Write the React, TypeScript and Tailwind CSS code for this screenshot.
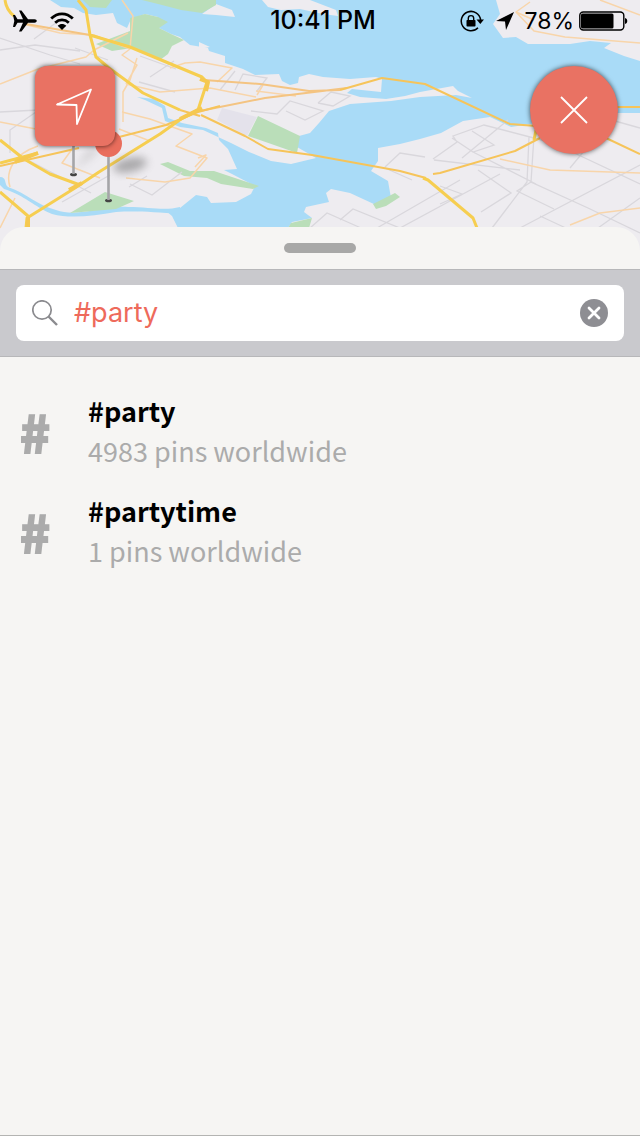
import { useState } from "react";

const tags = [
  { name: "#party", pins: 4983 },
  { name: "#partytime", pins: 1 },
];

function CityMap() {
  return (
    <svg
      viewBox="0 0 640 250"
      preserveAspectRatio="xMidYMin slice"
      className="absolute inset-0 h-full w-full"
      aria-hidden="true"
    >
      <rect width="640" height="250" fill="#eeecf0" />
      {/* water */}
      <path
        fill="#a9dbf7"
        d="M50 0L61 7L74 8L83 13L96 15L113 13L117 23L127 28L131 19L145 14L158 17L159 28L171 34L180 37L190 45L208 48L209 51L225 56L225 63L243 69L255 75L279 74L282 81L290 85L298 83L299 77L309 74L323 77L350 79L376 77L382 79L381 92L352 89L347 93L360 97L386 99L405 96L420 92L453 86L458 91L472 98L456 95L420 97L391 101L350 104L329 111L319 123L310 133L299 136L297 147L316 158L291 164L271 161L249 152L231 143L203 130L180 127L165 121L162 108L145 100L137 97L154 99L165 106L168 118L182 123L206 128L218 133L219 140L228 149L237 169L224 170L232 174L255 186L251 194L236 202L211 203L207 197L196 195L180 208L166 211L172 216L178 228L288 228L292 222L312 218L304 212L306 207L329 202L326 193L331 189L350 193L363 199L376 205L391 198L388 181L371 171L378 161L378 148L400 144L420 139L441 133L463 121L490 117L511 127L531 124L560 113L640 113V61L624 56L604 48L611 43L590 41L570 44L528 44L516 37L503 38L493 24L500 14L496 0L310 0L336 10L338 16L323 14L300 9L281 10L268 7L262 0Z"
      />
      <path fill="#eeecf0" d="M202 14L216 4L232 10L235 17L216 15ZM199 42L210 47L199 49Z" />
      <path fill="#a9dbf7" d="M0 177C7 177 4 184 8 187C28 194 36 205 56 210C78 218 104 205 128 207C150 207 164 211 180 207V214C153 212 136 211 116 212C93 216 70 219 52 214C33 206 26 196 4 189L0 185Z" />
      {/* parks */}
      <path
        fill="#badeb9"
        d="M83 0L90 7L106 8L112 0ZM142 0L162 5L181 10L202 13L216 5L216 0ZM96 44L130 31L130 18L145 14L158 17L168 22L159 28L171 34L184 40L172 46L168 54L160 60L132 48L112 51ZM258 116L300 136L297 153L248 136ZM70 213L105 192L134 201L116 209ZM160 164L168 162L190 171L214 171L229 176L259 186L253 189L221 184L207 178L184 176ZM373 204L395 193L400 197L386 206L376 209ZM291 223L312 218L309 228H288Z"
      />
      <path fill="#e4e2eb" d="M222 108L257 117L247 136L217 120Z" />
      {/* side streets */}
      <g fill="none" stroke="#d9d7dc" strokeWidth="1.3">
        <path d="M0 38L50 55L80 64M34 39L57 22M0 50L35 45L80 51M0 112L38 110M10 153V130L36 112M75 48L108 60M140 56L176 69M150 77L174 61M139 82L175 92M129 187L147 176M130 184L152 195L182 172M62 202L110 175M26 159L91 193" />
        <path d="M220 90L235 71M235 90L243 74L267 78L257 91M251 111L277 114L290 101L323 111L305 120L286 111M318 103L331 92L350 96L333 106L318 103" />
        <path d="M310 228L327 213L361 228M340 220L353 209L400 228L500 174M377 228L460 180M385 167L400 153L425 157M385 168L412 180M433 159L457 142L453 136L484 125L553 143M452 138L473 152L494 145L472 131M473 152L536 184M478 170L511 193L481 212M434 160L520 170M508 120L462 158M440 186L462 194L440 204M534 136L531 182L588 208L640 233M531 182L517 191L554 209M529 137L527 182L492 228M640 165L520 228M553 143L640 184M603 128L570 168M615 121L640 128M598 228L640 198M540 216L568 229" />
      </g>
      {/* minor roads */}
      <g fill="none" stroke="#f8d5aa" strokeWidth="1.5" strokeLinejoin="round">
        <path d="M23 24L60 33L94 35L130 49M0 84L38 69L86 57L94 50L128 33M122 0L133 16L130 49L122 55L137 65L126 84M137 58L130 80L123 92V122M126 84L160 92L210 88L256 97M170 68L185 63L200 62L232 68L217 82M122 112L150 119L192 134L176 146L207 158L190 178L165 182L126 178M119 129L150 141M0 122L41 130M75 145L62 163L100 178M10 187C5 171 14 154 38 146M0 228L15 198M198 158L206 155L195 167M534 20L516 12L530 2M516 12L534 31L565 37L640 43M600 0L640 15M500 159L550 170L640 173M570 225L600 213L640 208M256 91L296 96M263 85L257 95" />
      </g>
      {/* highways */}
      <g fill="none" stroke="#f6c45a" strokeLinejoin="round">
        <path strokeWidth="2" stroke="#f4c482" d="M204 80L260 84L309 91L340 90M200 111L265 98L347 88M26 24L90 35L130 47" />
        <path strokeWidth="2" d="M119 137L166 125L198 112L220 106M340 90L382 78L425 84L510 124L536 126M201 115L245 136L268 149L312 155L400 171L426 178M540 138L515 151L440 173L433 174M606 138L640 154M610 107H640M0 166L79 148M180 110L200 116" />
        <path stroke="#f6ce50" strokeWidth="3" d="M5 0C6 8 9 12 14 16M90 35L130 47L202 77L207 82L198 110L181 119L160 134L99 172L75 188L27 218L26 228M78 0L86 10L90 35L96 57L109 68L143 93L180 110M0 140L24 159L50 174L80 185M0 192L28 216M0 163L38 153M423 178L428 180L473 218L477 228M534 140L536 130" />
        <path strokeWidth="4" stroke="#f5c851" d="M15 162L38 153M180 119L202 108M28 217V228M69 190L82 183M200 79L208 82L206 91" />
      </g>
    </svg>
  );
}

function Pins() {
  return (
    <svg viewBox="0 0 130 150" className="absolute top-[60px] left-[30px] h-[150px] w-[130px]" aria-hidden="true">
      <defs>
        <filter id="shade" x="-50%" y="-50%" width="200%" height="200%">
          <feGaussianBlur stdDeviation="4" />
        </filter>
      </defs>
      <ellipse cx="100" cy="105" rx="17" ry="7" transform="rotate(-12 100 105)" fill="#555" opacity=".45" filter="url(#shade)" />
      <path d="M45 110L58 91L73 86Z" fill="#555" opacity=".25" filter="url(#shade)" />
      <ellipse cx="43.500" cy="114.500" rx="3.500" ry="1.800" fill="#444" />
      <ellipse cx="78.500" cy="140.500" rx="3.500" ry="1.800" fill="#444" />
      <path d="M43.500 84V114M78.500 96V140" stroke="#a5a5a8" strokeWidth="2.600" />
      <circle cx="78.500" cy="83.500" r="13.500" fill="#e96d5c" />
    </svg>
  );
}

function StatusBar() {
  return (
    <div className="relative grid h-[42px] grid-cols-[1fr_auto_1fr] items-center px-3 font-['Inter',sans-serif] text-black">
      <div className="flex items-center gap-3">
        <svg viewBox="0 0 26 24" className="h-6 w-[26px]" aria-label="Airplane mode">
          <path d="M1 6H3L5.500 10.300H11L7 1.500H9.500L16 10.300H22.500C25.500 10.300 25.500 13.700 22.500 13.700H16L9.500 22.500H7L11 13.700H5.500L3 18H1L2.300 12Z" />
        </svg>
        <svg viewBox="0 0 24 18" className="h-[18px] w-6" aria-label="Wi-Fi">
          <path d="M1.200 6.500C7.500.2 16.500.2 22.800 6.500M5.200 10.800C9.200 7 14.800 7 18.800 10.800" fill="none" stroke="#000" strokeWidth="2.800" />
          <path d="M7.700 13.700C10.200 11.400 13.800 11.400 16.300 13.700L12 18Z" />
        </svg>
      </div>
      <span className="ml-1.5 text-[25px] font-medium">10:41 PM</span>
      <div className="flex items-center justify-end">
        <svg viewBox="0 0 24 22" className="mr-3 h-[22px] w-6" aria-label="Rotation lock">
          <path d="M18 17.800A9.700 9.700 0 1 1 20.600 10" fill="none" stroke="#000" strokeWidth="1.500" />
          <path d="M16.500 9.500H24L20.300 14Z" />
          <rect x="6.500" y="10" width="9" height="6.500" rx=".8" />
          <path d="M8.300 11V8.300a2.700 2.700 0 0 1 5.400 0V11" fill="none" stroke="#000" strokeWidth="1.400" />
        </svg>
        <svg viewBox="0 0 18 18" className="mr-2.5 h-[18px] w-[18px]" aria-label="Location in use">
          <path d="M0 9L18 0L10 18L9 9.500Z" />
        </svg>
        <span className="mr-1 text-[23px]">78%</span>
        <svg viewBox="0 0 50 20" className="h-5 w-[50px]" aria-label="Battery">
          <rect x="1.800" y="1" width="44" height="18" rx="3.500" fill="none" stroke="#000" strokeWidth="1.400" />
          <rect x="3" y="2.500" width="32.500" height="15" rx="1.500" />
          <path d="M47 7C50 7.500 50 12.500 47 13Z" />
        </svg>
      </div>
    </div>
  );
}

export default function App() {
  const [query, setQuery] = useState("#party");

  return (
    <div className="relative flex min-h-screen flex-col border-b border-[#b4b4b2] bg-[#f6f5f3]">
      <header className="relative h-[227px]">
        <div className="absolute inset-x-0 top-0 h-[250px] overflow-hidden">
          <CityMap />
        </div>
        <StatusBar />
        <Pins />
        <div className="relative flex items-start justify-between pt-6 pr-[22px] pl-[35px]">
          <button
            type="button"
            aria-label="Go to my location"
            className="flex size-20 items-center justify-center rounded-xl bg-[#e97263] shadow-[0_0_5px_rgba(0,0,0,0.7)]"
          >
            <svg viewBox="0 0 80 80" className="size-20" fill="none" stroke="#fff" strokeWidth="1.800">
              <path d="M56 23.500L22 38.500L41.500 39L42 58Z" strokeLinejoin="round" />
            </svg>
          </button>
          <button
            type="button"
            aria-label="Close"
            className="flex size-[88px] items-center justify-center rounded-full bg-[#e97263] shadow-[0_0_5px_rgba(0,0,0,0.65)]"
          >
            <svg viewBox="0 0 28 28" className="size-7" stroke="#fff" strokeWidth="1.800">
              <path d="M1 1L27 27M27 1L1 27" />
            </svg>
          </button>
        </div>
      </header>

      <main className="relative flex-1 rounded-t-3xl bg-[#f6f5f3]">
        <div className="flex h-[42px] justify-center pt-4">
          <div className="h-[10px] w-[72px] rounded-full bg-[#a8a8a7]" />
        </div>
        <div className="border-y border-[#b7b7b9] bg-[#c9c9cd] px-4 py-[15px]">
          <div className="flex h-14 items-center rounded-lg bg-white px-4">
            <svg viewBox="0 0 26 26" className="size-[26px] shrink-0" fill="none" stroke="#8b8b8f" aria-hidden="true">
              <circle cx="10" cy="10" r="9.200" strokeWidth="1.700" />
              <path d="M16.500 16.500L25 25" strokeWidth="2.400" />
            </svg>
            <input
              type="text"
              aria-label="Search tags"
              value={query}
              onChange={(e) => setQuery(e.target.value)}
              className="ml-4 min-w-0 flex-1 bg-transparent font-['Inter',sans-serif] text-[27px] text-[#ee6a5b] outline-none"
            />
            <button type="button" aria-label="Clear search" onClick={() => setQuery("")}>
              <svg viewBox="0 0 28 28" className="size-7">
                <circle cx="14" cy="14" r="14" fill="#8e8e93" />
                <path d="M9 9L19 19M19 9L9 19" stroke="#fff" strokeWidth="2.800" strokeLinecap="round" />
              </svg>
            </button>
          </div>
        </div>

        <ul className="pt-6 font-['Noto_Sans_CJK_SC','Noto_Sans',sans-serif]">
          {tags.map((tag) => (
            <li key={tag.name} className="flex h-[100px] items-center pr-4 pl-5">
              <span
                className="w-[68px] text-[51px] leading-none font-bold text-[#ababab] [-webkit-text-stroke:2px_#ababab]"
                aria-hidden="true"
              >
                #
              </span>
              <div className="min-w-0">
                <p className="text-[27px] leading-10 font-bold text-black">{tag.name}</p>
                <p className="text-[27px] leading-10 text-[#ababab]">{tag.pins} pins worldwide</p>
              </div>
            </li>
          ))}
        </ul>
      </main>
    </div>
  );
}
